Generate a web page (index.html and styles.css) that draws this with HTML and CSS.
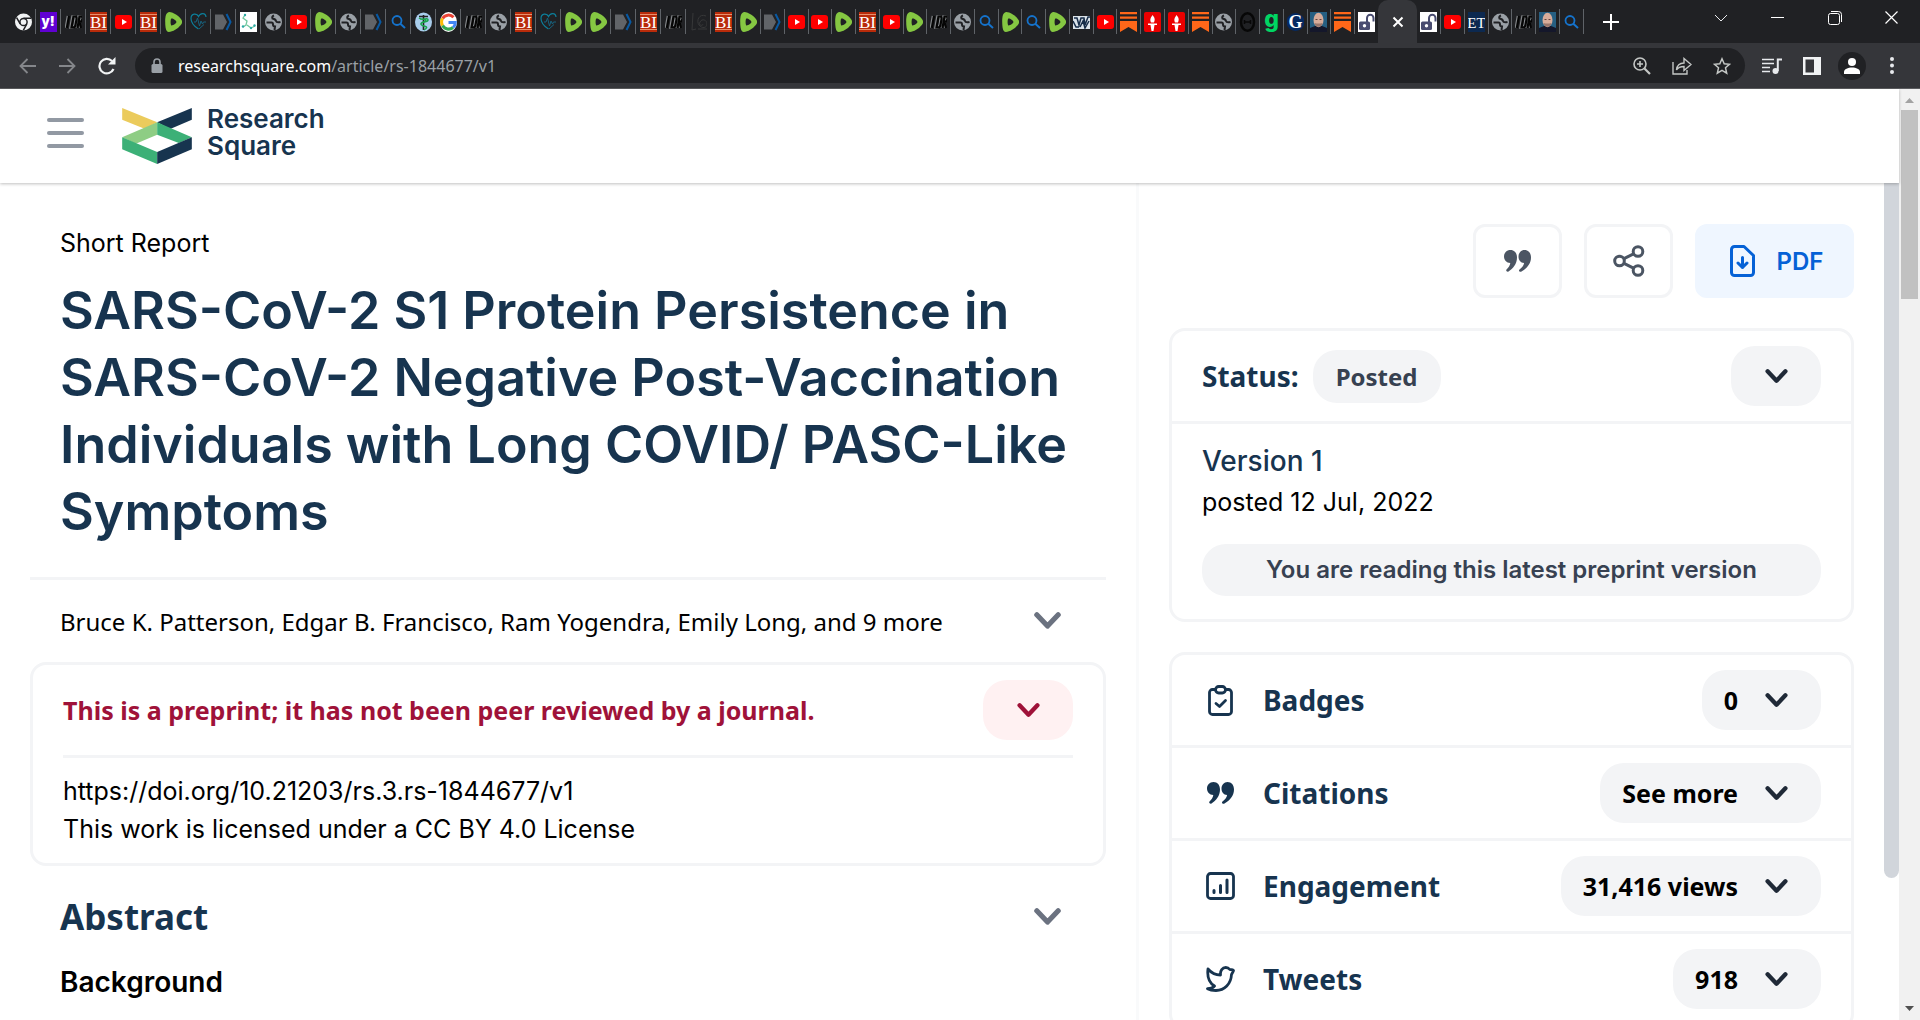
FILE: index.html
```html
<!DOCTYPE html>
<html lang="en">
<head>
    <meta charset="UTF-8">
    <meta name="viewport" content="width=device-width, initial-scale=1.0">
    <title>SARS-CoV-2 S1 Protein Persistence | Research Square</title>
    <link rel="stylesheet" href="styles.css">
</head>
<body>
    <!-- Icon sprite -->
    <svg class="sprite" aria-hidden="true">
        <symbol id="f-chrome" viewBox="0 0 17 20"><circle cx="8.5" cy="10" r="8.5" fill="#f1f3f4"/><circle cx="8.5" cy="10" r="3.6" fill="#f1f3f4" stroke="#202124" stroke-width="1.5"/><path d="M8.5 6.2h7.6M5.2 11.8L1.6 5.6M11.8 11.9L8.3 18.3" stroke="#202124" stroke-width="1.5"/></symbol>
        <symbol id="f-yahoo" viewBox="0 0 17 20"><rect width="17" height="20" fill="#6001d2"/><text x="8" y="14" text-anchor="middle" font-family="Inter" font-weight="900" font-size="13" fill="#fff">y!</text></symbol>
        <symbol id="f-idr" viewBox="0 0 17 20"><g fill="none" stroke="#85888b" stroke-width="2.6"><path d="M3 4L.8 16M7.500 4.500L5.500 15.500h1.500q2 0 2.500-2.500l1-5.500q.5-3-1.500-3zM11.500 16l2-11.500h1.500q2 0 1.500 2.500t-3 3l1.500 6"/></g><g fill="none" stroke="#050505" stroke-width="2.200"><path d="M4 4L1.800 16M8.500 4.500L6.500 15.500h1.500q2 0 2.500-2.500l1-5.500q.5-3-1.500-3zM12.500 16l2-11.500h1.500q2 0 1.500 2.500t-3 3l1.500 6"/></g></symbol>
        <symbol id="f-bi" viewBox="0 0 17 20"><rect width="17" height="20" fill="#b92b0a"/><path d="M0 2.500h17M0 17.500h17" stroke="#e8916f" stroke-width="1"/><text x="8.500" y="16" text-anchor="middle" font-family="Liberation Serif" font-size="17" fill="#fff">BI</text></symbol>
        <symbol id="f-yt" viewBox="0 0 17 20"><rect y="3" width="17" height="14" rx="3" fill="#f00"/><path d="M7 7l5 3-5 3z" fill="#fff"/></symbol>
        <symbol id="f-rumble" viewBox="0 0 17 20"><path d="M3.500.2C7-.6 15 4.500 16.800 8.500c.6 1.500.2 3-1 4.500-3 3.700-8 6.800-12 7C.5 20 .3 14 .2 10 .1 6 .5 1 3.500.2z" fill="#85c742"/><path d="M6.300 6.600c1.500-.4 5 1.900 5.200 3.400-.2 1.500-3.700 3.800-5.200 3.400-.9-1-.9-5.800 0-6.800z" fill="#202124"/></symbol>
        <symbol id="f-heart" viewBox="0 0 17 20"><path d="M16 5C15.500 0 10 1 8.500 4.500 7 1 1 1 1 6.500c0 4 3.500 8 7.500 10.500" fill="none" stroke="#0c7f9b" stroke-width="1.200"/><path d="M4 10h2l1.500-4 2 8 1.500-5 1.500 3 1-2H16M9 17l5-4.500" fill="none" stroke="#17627e" stroke-width="1"/></symbol>
        <symbol id="f-tag" viewBox="0 0 17 20"><path d="M0 2.500h8l4 7.500-4 7.500H0z" fill="#616468"/><path d="M11.500 2l4 8-4 8" fill="none" stroke="#0759a3" stroke-width="2"/></symbol>
        <symbol id="f-chem" viewBox="0 0 17 20"><rect width="17" height="20" fill="#fff"/><path d="M5 3L3 6l4 3-1 4-3 2M7 13l4 3 4-2" fill="none" stroke="#71c89f" stroke-width="1.300"/><g fill="#2ca7a5"><circle cx="5" cy="3" r="1.200"/><circle cx="3" cy="14.500" r="1.200"/><circle cx="11" cy="16" r="1.200"/><circle cx="14.500" cy="13.500" r="1.200"/></g></symbol>
        <symbol id="f-globe" viewBox="0 0 17 20"><circle cx="8.500" cy="10" r="8.500" fill="#9aa0a6"/><path d="M1.500 10.500h5q1.500 0 1.500 2t2 2l-.5 3.500M9 3.500q-2.500 1-1.500 3 3 .5 3.500 2.500t4.500 1" fill="none" stroke="#202124" stroke-width="2"/></symbol>
        <symbol id="f-search" viewBox="0 0 17 20"><circle cx="7" cy="8.500" r="4.500" fill="none" stroke="#1573cc" stroke-width="1.800"/><path d="M10.300 11.800L15 16" stroke="#1573cc" stroke-width="2"/></symbol>
        <symbol id="f-med" viewBox="0 0 17 20"><ellipse cx="8.500" cy="10" rx="8.500" ry="9.500" fill="#a8cdec"/><path d="M8.500 3v15M4 4.500h9" stroke="#222" stroke-width="1.600"/><path d="M5 7c7 0 7 2 3.500 3S5 13 9 14s3 2 0 4M4 6c4 3 9-1 9 2s-7 1-7 4" fill="none" stroke="#17a34a" stroke-width="1.500"/></symbol>
        <symbol id="f-google" viewBox="0 0 17 20"><ellipse cx="8.500" cy="10" rx="8.500" ry="10" fill="#fff"/><g fill="none" stroke-width="3"><path d="M13.500 5.300A6.800 6.800 0 0 0 2.600 6.500" stroke="#ea4335"/><path d="M2.600 6.500a6.800 6.800 0 0 0 0 7" stroke="#fbbc05"/><path d="M2.600 13.500a6.800 6.800 0 0 0 10.400 2" stroke="#34a853"/><path d="M13 15.500a6.800 6.800 0 0 0 2.300-5h-6.800" stroke="#4285f4"/></g></symbol>
        <symbol id="f-spiral" viewBox="0 0 17 20"><path d="M3 1L2 18l4-1M16 4C9 1 6 9 9 13s8 3 8-1-5-6-7-2 3 4 3 2M8 17h9" fill="none" stroke="#373839" stroke-width="1"/></symbol>
        <symbol id="f-w" viewBox="0 0 17 20"><rect y="4" width="17" height="13" fill="#dbe3ea"/><path d="M1 6h3l2 7 2-7h3l1 7 3-8h2M0 9l3 6h3M7 15l3-6 2 7 4-7" fill="none" stroke="#172d49" stroke-width="1.500"/></symbol>
        <symbol id="f-substack" viewBox="0 0 17 20"><path d="M0 0h17v2.300H0zM0 4.400h17v2.300H0zM0 9h17v11l-8.500-5L0 20z" fill="#ff6719"/></symbol>
        <symbol id="f-torch" viewBox="0 0 17 20"><rect width="17" height="20" rx="2" fill="#eb0000"/><path d="M8.500 3c2 2.500 3 4 1.500 7.500H7C5.500 7 7 5.500 8.500 3zM4 11.500h9v1.500H10.500L9.500 19h-2l-1-6H4z" fill="#fff"/></symbol>
        <symbol id="f-theta" viewBox="0 0 17 20"><ellipse cx="8.500" cy="10" rx="6.500" ry="8.700" fill="none" stroke="#070707" stroke-width="2.500"/><path d="M5 10h7M5.500 8v4M11.500 8v4" stroke="#070707" stroke-width="1.500"/></symbol>
        <symbol id="f-g" viewBox="0 0 17 20"><text x="8.500" y="14.500" text-anchor="middle" font-family="Inter" font-weight="800" font-size="23" fill="#00d563">g</text></symbol>
        <symbol id="f-guardian" viewBox="0 0 17 20"><circle cx="8.500" cy="10" r="9" fill="#052962"/><text x="8.500" y="16" text-anchor="middle" font-family="Liberation Serif" font-weight="700" font-size="18" fill="#fff">G</text></symbol>
        <symbol id="f-man" viewBox="0 0 17 20"><rect width="17" height="20" fill="#265f82"/><path d="M0 20v-4l5-2h7l5 2v4z" fill="#14172b"/><ellipse cx="8.500" cy="8" rx="5" ry="7.200" fill="#d7ac9a"/><path d="M4.500 11c1 5 7 5 8 0l-2 .5h-4z" fill="#98766c"/><path d="M5.500 7.500h2M9.500 7.500h2" stroke="#67443d"/></symbol>
        <symbol id="f-lock" viewBox="0 0 17 20"><rect width="17" height="20" fill="#fff"/><path d="M9 11V6a3 3 0 0 1 6.500 0v3.500" fill="none" stroke="#494c70" stroke-width="2"/><rect x="1" y="9.500" width="11" height="8.500" rx="1.500" fill="#494c70"/><circle cx="6.500" cy="13.700" r="1.700" fill="#fff"/></symbol>
        <symbol id="f-et" viewBox="0 0 17 20"><rect width="17" height="20" fill="#0c2950"/><text x="8.500" y="15.500" text-anchor="middle" font-family="Liberation Serif" font-size="15" fill="#fff">ET</text></symbol>
        <symbol id="i-chevron" viewBox="0 0 24 16"><path d="M2.500 2.500L12 12.500l9.500-10" fill="none" stroke="currentColor" stroke-width="4.600" stroke-linecap="round" stroke-linejoin="round"/></symbol>
        <symbol id="i-quote" viewBox="0 0 27 22"><path d="M6.500 0C10.500 0 13 3 13 7.500 13 14 9 18.500 4.500 21.500c-1.500.8-3-.8-2-2C4.500 17.500 6 15.500 6.300 13 2.500 13 0 10 0 6.500S2.500 0 6.500 0zM20.500 0C24.500 0 27 3 27 7.500 27 14 22.500 18.500 17.500 21.500c-1.500.8-3.500-.8-2-2 2.500-2 4.300-4 4.600-6.500C16.500 13 14.500 10 14.500 6.500S17 0 20.500 0z" fill="currentColor"/></symbol>
    </svg>

    <div class="browser">
        <div class="tab-strip">
            <div class="tabs">
                <button class="tab" aria-label="Tab"><svg><use href="#f-chrome"/></svg></button>
                <button class="tab" aria-label="Tab"><svg><use href="#f-yahoo"/></svg></button>
                <button class="tab" aria-label="Tab"><svg><use href="#f-idr"/></svg></button>
                <button class="tab" aria-label="Tab"><svg><use href="#f-bi"/></svg></button>
                <button class="tab" aria-label="Tab"><svg><use href="#f-yt"/></svg></button>
                <button class="tab" aria-label="Tab"><svg><use href="#f-bi"/></svg></button>
                <button class="tab" aria-label="Tab"><svg><use href="#f-rumble"/></svg></button>
                <button class="tab" aria-label="Tab"><svg><use href="#f-heart"/></svg></button>
                <button class="tab" aria-label="Tab"><svg><use href="#f-tag"/></svg></button>
                <button class="tab" aria-label="Tab"><svg><use href="#f-chem"/></svg></button>
                <button class="tab" aria-label="Tab"><svg><use href="#f-globe"/></svg></button>
                <button class="tab" aria-label="Tab"><svg><use href="#f-yt"/></svg></button>
                <button class="tab" aria-label="Tab"><svg><use href="#f-rumble"/></svg></button>
                <button class="tab" aria-label="Tab"><svg><use href="#f-globe"/></svg></button>
                <button class="tab" aria-label="Tab"><svg><use href="#f-tag"/></svg></button>
                <button class="tab" aria-label="Tab"><svg><use href="#f-search"/></svg></button>
                <button class="tab" aria-label="Tab"><svg><use href="#f-med"/></svg></button>
                <button class="tab" aria-label="Tab"><svg><use href="#f-google"/></svg></button>
                <button class="tab" aria-label="Tab"><svg><use href="#f-idr"/></svg></button>
                <button class="tab" aria-label="Tab"><svg><use href="#f-globe"/></svg></button>
                <button class="tab" aria-label="Tab"><svg><use href="#f-bi"/></svg></button>
                <button class="tab" aria-label="Tab"><svg><use href="#f-heart"/></svg></button>
                <button class="tab" aria-label="Tab"><svg><use href="#f-rumble"/></svg></button>
                <button class="tab" aria-label="Tab"><svg><use href="#f-rumble"/></svg></button>
                <button class="tab" aria-label="Tab"><svg><use href="#f-tag"/></svg></button>
                <button class="tab" aria-label="Tab"><svg><use href="#f-bi"/></svg></button>
                <button class="tab" aria-label="Tab"><svg><use href="#f-idr"/></svg></button>
                <button class="tab" aria-label="Tab"><svg><use href="#f-spiral"/></svg></button>
                <button class="tab" aria-label="Tab"><svg><use href="#f-bi"/></svg></button>
                <button class="tab" aria-label="Tab"><svg><use href="#f-rumble"/></svg></button>
            </div>
            <div class="tabs tabs-narrow">
                <button class="tab" aria-label="Tab"><svg><use href="#f-tag"/></svg></button>
                <button class="tab" aria-label="Tab"><svg><use href="#f-yt"/></svg></button>
                <button class="tab" aria-label="Tab"><svg><use href="#f-yt"/></svg></button>
                <button class="tab" aria-label="Tab"><svg><use href="#f-rumble"/></svg></button>
                <button class="tab" aria-label="Tab"><svg><use href="#f-bi"/></svg></button>
                <button class="tab" aria-label="Tab"><svg><use href="#f-yt"/></svg></button>
                <button class="tab" aria-label="Tab"><svg><use href="#f-rumble"/></svg></button>
                <button class="tab" aria-label="Tab"><svg><use href="#f-idr"/></svg></button>
                <button class="tab" aria-label="Tab"><svg><use href="#f-globe"/></svg></button>
                <button class="tab" aria-label="Tab"><svg><use href="#f-search"/></svg></button>
                <button class="tab" aria-label="Tab"><svg><use href="#f-rumble"/></svg></button>
                <button class="tab" aria-label="Tab"><svg><use href="#f-search"/></svg></button>
                <button class="tab" aria-label="Tab"><svg><use href="#f-rumble"/></svg></button>
                <button class="tab" aria-label="Tab"><svg><use href="#f-w"/></svg></button>
                <button class="tab" aria-label="Tab"><svg><use href="#f-yt"/></svg></button>
                <button class="tab" aria-label="Tab"><svg><use href="#f-substack"/></svg></button>
                <button class="tab" aria-label="Tab"><svg><use href="#f-torch"/></svg></button>
                <button class="tab" aria-label="Tab"><svg><use href="#f-torch"/></svg></button>
                <button class="tab" aria-label="Tab"><svg><use href="#f-substack"/></svg></button>
                <button class="tab" aria-label="Tab"><svg><use href="#f-globe"/></svg></button>
                <button class="tab" aria-label="Tab"><svg><use href="#f-theta"/></svg></button>
                <button class="tab" aria-label="Tab"><svg><use href="#f-g"/></svg></button>
                <button class="tab" aria-label="Tab"><svg><use href="#f-guardian"/></svg></button>
                <button class="tab" aria-label="Tab"><svg><use href="#f-man"/></svg></button>
                <button class="tab" aria-label="Tab"><svg><use href="#f-substack"/></svg></button>
            </div>
            <button class="tab tab-before" aria-label="Tab"><svg><use href="#f-lock"/></svg></button>
            <button class="tab-active" aria-label="Close tab"><svg width="12" height="12" viewBox="0 0 12 12"><path d="M1.500 1.500l9 9M10.500 1.500l-9 9" stroke="#fff" stroke-width="2"/></svg></button>
            <div class="tabs tabs-last">
                <button class="tab" aria-label="Tab"><svg><use href="#f-lock"/></svg></button>
                <button class="tab" aria-label="Tab"><svg><use href="#f-yt"/></svg></button>
                <button class="tab" aria-label="Tab"><svg><use href="#f-et"/></svg></button>
                <button class="tab" aria-label="Tab"><svg><use href="#f-globe"/></svg></button>
                <button class="tab" aria-label="Tab"><svg><use href="#f-idr"/></svg></button>
                <button class="tab" aria-label="Tab"><svg><use href="#f-man"/></svg></button>
                <button class="tab" aria-label="Tab"><svg><use href="#f-search"/></svg></button>
            </div>
            <button class="new-tab" aria-label="New tab"><svg width="16" height="16" viewBox="0 0 16 16"><path d="M8 0v16M0 8h16" stroke="#fff" stroke-width="2"/></svg></button>
            <div class="window-controls">
                <button aria-label="Search tabs"><svg width="14" height="8" viewBox="0 0 14 8"><path d="M1 1l6 6 6-6" fill="none" stroke="#e8eaed"/></svg></button>
                <button aria-label="Minimize"><svg width="13" height="13" viewBox="0 0 13 13"><path d="M0 6.500h13" stroke="#fff"/></svg></button>
                <button aria-label="Restore"><svg width="14" height="14" viewBox="0 0 14 14" fill="none" stroke="#fff"><rect x=".5" y="2.500" width="11" height="11" rx="2"/><path d="M3 .5h7.500a3 3 0 0 1 3 3V11"/></svg></button>
                <button aria-label="Close"><svg width="13" height="13" viewBox="0 0 13 13"><path d="M.5.5l12 12M12.500.5l-12 12" stroke="#fff" stroke-width="1.200"/></svg></button>
            </div>
        </div>

        <div class="toolbar">
            <div class="nav-buttons">
                <button aria-label="Back"><svg width="17" height="16" viewBox="0 0 17 16"><path d="M17 8H1.500M8.500 1l-7 7 7 7" fill="none" stroke="#85878b" stroke-width="1.800"/></svg></button>
                <button aria-label="Forward"><svg width="17" height="16" viewBox="0 0 17 16"><path d="M0 8h15.500M8.500 1l7 7-7 7" fill="none" stroke="#85878b" stroke-width="1.800"/></svg></button>
                <button aria-label="Reload"><svg width="18" height="18" viewBox="0 0 18 18"><path d="M15.500 12A7.300 7.300 0 1 1 14 4" fill="none" stroke="#f1f3f4" stroke-width="2.200"/><path d="M17.500 0v7.500H10z" fill="#f1f3f4"/></svg></button>
            </div>
            <div class="omnibox">
                <svg width="12" height="16" viewBox="0 0 12 16"><rect x=".5" y="6" width="11" height="9" rx="1.500" fill="#9aa0a6"/><path d="M3 6V4a3 3 0 0 1 6 0v2" fill="none" stroke="#9aa0a6" stroke-width="1.600"/></svg>
                <span class="url">researchsquare.com<span class="path">/article/rs-1844677/v1</span></span>
                <button aria-label="Zoom"><svg width="18" height="18" viewBox="0 0 18 18" fill="none" stroke="#c4c7c5" stroke-width="1.600"><circle cx="7" cy="7" r="6"/><path d="M4 7h6M7 4v6"/><path d="M11.500 11.500L17 17" stroke-width="2.200"/></svg></button>
                <button aria-label="Share"><svg width="20" height="18" viewBox="0 0 20 18" fill="none" stroke="#c4c7c5" stroke-width="1.400"><path d="M1 5v12h14v-4M4.500 13C5 8.500 8 6 12 6V1.500L19 7.500l-7 6V9.500c-3.500 0-6 1-7.500 3.500z"/></svg></button>
                <button aria-label="Bookmark"><svg width="18" height="18" viewBox="0 0 18 18"><path d="M9 1.800l2.200 5 5.300.5-4 3.500 1.200 5.300L9 13.300l-4.700 2.800 1.200-5.300-4-3.500 5.300-.5z" fill="none" stroke="#c4c7c5" stroke-width="1.500"/></svg></button>
            </div>
            <div class="tool-buttons">
                <button aria-label="Media"><svg width="20" height="16" viewBox="0 0 20 16"><path d="M0 1.500h12M0 5.500h12M0 9.500h8M0 13.500h8" stroke="#e8eaed" stroke-width="1.700"/><path d="M15.800 13V1.500H20" fill="none" stroke="#e8eaed" stroke-width="2"/><circle cx="13.500" cy="13" r="3" fill="#e8eaed"/></svg></button>
                <button aria-label="Side panel"><svg width="18" height="18" viewBox="0 0 18 18"><path d="M0 0h18v18H0zM2.500 2.500v13H11v-13z" fill="#f1f3f4" fill-rule="evenodd"/></svg></button>
                <button aria-label="Profile"><svg width="28" height="28" viewBox="0 0 28 28"><circle cx="14" cy="14" r="14" fill="#202124"/><circle cx="14" cy="10" r="4" fill="#fff"/><path d="M6 22v-2c0-3 4-4.500 8-4.500s8 1.500 8 4.500v2z" fill="#fff"/></svg></button>
                <button aria-label="Menu"><svg width="4" height="17" viewBox="0 0 4 17" fill="#e8eaed"><circle cx="2" cy="2" r="2"/><circle cx="2" cy="8.500" r="2"/><circle cx="2" cy="15" r="2"/></svg></button>
            </div>
        </div>

        <div class="viewport">
            <div class="page">
                <header class="site-header">
                    <button class="menu" aria-label="Open menu"><span></span><span></span><span></span></button>
                    <a class="logo" href="#">
                        <svg width="70" height="56" viewBox="0 0 209 168"><path d="M0 0l105 43-36 20L0 35z" fill="#ebcb5c"/><path d="M209 0v35l-65 28-39-20z" fill="#17344f"/><path d="M105 43v37l-64 27L0 88z" fill="#8ecd84"/><path d="M105 43l104 45-39 17-65-25z" fill="#3cb077"/><path d="M0 88l105 44v36L0 124z" fill="#3cb077"/><path d="M209 88v36l-104 44v-36z" fill="#17344f"/></svg>
                        <span>Research<br>Square</span>
                    </a>
                </header>

                <div class="columns">
                    <main class="article">
                        <div class="intro">
                            <p class="type">Short Report</p>
                            <h1>SARS-CoV-2 S1 Protein Persistence in SARS-CoV-2 Negative Post-Vaccination Individuals with Long COVID/ PASC-Like Symptoms</h1>
                        </div>
                        <div class="authors">
                            <span>Bruce K. Patterson, Edgar B. Francisco, Ram Yogendra, Emily Long, and 9 more</span>
                            <button class="toggle" aria-label="Show authors"><svg class="chevron-lg"><use href="#i-chevron"/></svg></button>
                        </div>
                        <section class="card notice">
                            <div class="notice-head">
                                <strong>This is a preprint; it has not been peer reviewed by a journal.</strong>
                                <button class="pill pill-red" aria-label="More about preprints"><svg class="chevron"><use href="#i-chevron"/></svg></button>
                            </div>
                            <div class="notice-body">
                                <a href="#">https://doi.org/10.21203/rs.3.rs-1844677/v1</a>
                                <p>This work is licensed under a <a href="#">CC BY 4.0 License</a></p>
                            </div>
                        </section>
                        <section class="abstract">
                            <div class="abstract-head">
                                <h2>Abstract</h2>
                                <button class="toggle" aria-label="Toggle abstract"><svg class="chevron-lg"><use href="#i-chevron"/></svg></button>
                            </div>
                            <h3>Background</h3>
                        </section>
                    </main>

                    <aside class="sidebar">
                        <div class="actions">
                            <button class="action" aria-label="Cite"><svg width="27" height="22"><use href="#i-quote"/></svg></button>
                            <button class="action" aria-label="Share"><svg width="32" height="32" viewBox="0 0 32 32" fill="none" stroke="currentColor" stroke-width="3"><circle cx="6.500" cy="16" r="4.800"/><circle cx="25" cy="6.500" r="4.800"/><circle cx="25" cy="25.500" r="4.800"/><path d="M11 13.700l9.500-4.900M11 18.300l9.500 4.900"/></svg></button>
                            <a class="pdf" href="#"><svg width="25" height="32" viewBox="0 0 25 32" fill="none" stroke="currentColor" stroke-width="3" stroke-linecap="round" stroke-linejoin="round"><path d="M4.500 1.500H14L23.500 10.500V27.500a3 3 0 0 1-3 3h-16a3 3 0 0 1-3-3v-23a3 3 0 0 1 3-3zM12.500 12.500v10M8 18l4.500 4.500L17 18"/></svg>PDF</a>
                        </div>

                        <section class="card">
                            <div class="row">
                                <h4>Status:</h4>
                                <span class="badge">Posted</span>
                                <button class="pill" aria-label="Show versions"><svg class="chevron"><use href="#i-chevron"/></svg></button>
                            </div>
                            <div class="version">
                                <h5>Version 1</h5>
                                <p>posted 12 Jul, 2022</p>
                                <div class="latest">You are reading this latest preprint version</div>
                            </div>
                        </section>

                        <section class="card">
                            <div class="row">
                                <span class="icon"><svg width="25" height="31" viewBox="0 0 25 31" fill="none" stroke="currentColor" stroke-width="2.800" stroke-linecap="round" stroke-linejoin="round"><path d="M7.500 4.500H4.500a3 3 0 0 0-3 3v19a3 3 0 0 0 3 3h16a3 3 0 0 0 3-3v-19a3 3 0 0 0-3-3H17.500"/><rect x="7.500" y="1.500" width="10" height="6.500" rx="3.200"/><path d="M8 18.500l3.500 3 6-6"/></svg></span>
                                <h4>Badges</h4>
                                <button class="pill">0 <svg class="chevron"><use href="#i-chevron"/></svg></button>
                            </div>
                            <div class="row">
                                <span class="icon"><svg width="27" height="22"><use href="#i-quote"/></svg></span>
                                <h4>Citations</h4>
                                <button class="pill">See more <svg class="chevron"><use href="#i-chevron"/></svg></button>
                            </div>
                            <div class="row">
                                <span class="icon"><svg width="29" height="28" viewBox="0 0 29 28" fill="none" stroke="currentColor" stroke-width="2.800" stroke-linecap="round"><rect x="1.500" y="1.500" width="26" height="25" rx="3"/><path d="M8 18.500v2M14.500 13.500v7M21 8v12.500" stroke-width="3"/></svg></span>
                                <h4>Engagement</h4>
                                <button class="pill">31,416 views <svg class="chevron"><use href="#i-chevron"/></svg></button>
                            </div>
                            <div class="row">
                                <span class="icon"><svg width="29" height="26" viewBox="0 0 29 26"><path d="M27.500 4.500c-.3 1.500-1.500 2.500-2 4C25 18 18.500 24.500 10 24.500c-3.500 0-6.500-.7-8.500-1.800 3 0 5.500-1 7-2.700C3.500 17 1 11 2 3c3 3.500 7 6 12.500 6-.5-4.500 2-7.500 5.300-7.500 2 0 3.200 1 4 2 1.500.5 2.500-.2 3.700 1z" fill="none" stroke="currentColor" stroke-width="2.800" stroke-linejoin="round"/></svg></span>
                                <h4>Tweets</h4>
                                <button class="pill">918 <svg class="chevron"><use href="#i-chevron"/></svg></button>
                            </div>
                        </section>
                    </aside>

                    <div class="inner-scroll"><span></span></div>
                </div>
            </div>
            <div class="scrollbar">
                <svg class="arrow" width="9" height="5" viewBox="0 0 9 5"><path d="M0 5l4.500-5L9 5z" fill="#a3a3a3"/></svg>
                <span class="thumb"></span>
                <svg class="arrow arrow-down" width="9" height="5" viewBox="0 0 9 5"><path d="M0 0h9L4.500 5z" fill="#505050"/></svg>
            </div>
        </div>
    </div>
</body>
</html>
```

FILE: styles.css
```css
* { box-sizing: border-box; }
body {
    margin: 0;
    font-family: Inter, "Liberation Sans", sans-serif;
    font-size: 24px;
    color: #000;
    background: #fff;
}
h1, h2, h3, h4, h5, p { margin: 0; }
a { color: inherit; text-decoration: none; }
button {
    border: none;
    padding: 0;
    background: none;
    color: inherit;
    font: inherit;
    cursor: pointer;
}
svg { display: block; flex: none; }
.sprite { display: none; }
.browser {
    height: 100vh;
    display: flex;
    flex-direction: column;
    overflow: hidden;
}

/* Browser chrome */
.tab-strip {
    flex: none;
    display: flex;
    align-items: center;
    height: 43px;
    padding-left: 11px;
    background: #202124;
}
.tabs { display: flex; }
.tab {
    flex: none;
    width: 25px;
    height: 25px;
    display: flex;
    align-items: center;
    justify-content: center;
    border-right: 1px solid #5f6368;
}
.tab svg { width: 17px; height: 20px; }
.tabs-narrow { width: 594px; }
.tabs-last { width: 167px; }
.tabs-narrow .tab, .tabs-last .tab { flex: 1; }
.tab-before { width: 23px; border: none; }
.tab-active {
    width: 39px;
    height: 43px;
    display: flex;
    align-items: center;
    justify-content: center;
    background: #35363a;
    border-radius: 10px 10px 0 0;
}
.new-tab { margin-left: 19px; }
.window-controls {
    display: flex;
    margin-left: auto;
    height: 35px;
    align-self: flex-start;
}
.window-controls button {
    width: 57px;
    display: flex;
    align-items: center;
    justify-content: center;
}
.toolbar {
    flex: none;
    display: flex;
    align-items: center;
    height: 46px;
    background: #35363a;
    border-bottom: 1px solid #5c5d60;
}
.nav-buttons {
    display: flex;
    padding-left: 7px;
    width: 135px;
}
.nav-buttons button, .tool-buttons button {
    width: 40px;
    display: flex;
    align-items: center;
    justify-content: center;
}
.omnibox {
    flex: 1;
    display: flex;
    align-items: center;
    height: 35px;
    padding: 0 14px 0 16px;
    border-radius: 18px;
    background: #202124;
    gap: 21px;
}
.url {
    flex: 1;
    margin-left: -6px;
    font-family: "Noto Sans", sans-serif;
    font-size: 16px;
    color: #fff;
}
.path { color: #9aa0a6; }
.tool-buttons {
    display: flex;
    padding: 0 8px 0 7px;
}

/* Page */
.viewport {
    flex: 1;
    display: flex;
    min-height: 0;
}
.page {
    flex: 1;
    display: flex;
    flex-direction: column;
}
.site-header {
    position: relative;
    flex: none;
    display: flex;
    align-items: center;
    height: 94px;
    padding: 0 47px;
    gap: 38px;
    box-shadow: 0 1px 3px rgba(0, 0, 0, 0.25);
}
.menu {
    display: flex;
    flex-direction: column;
    gap: 9px;
    width: 37px;
    margin-bottom: 6px;
}
.menu span {
    height: 4px;
    border-radius: 2px;
    background: #9299a3;
}
.logo {
    display: flex;
    align-items: center;
    gap: 15px;
    font-size: 26px;
    font-weight: 600;
    line-height: 27px;
    color: #17344f;
}
.logo span { padding-bottom: 8px; }
.columns {
    flex: 1;
    display: grid;
    grid-template-columns: minmax(0, 1139fr) minmax(0, 745fr) 15px;
    grid-template-rows: minmax(0, 1fr);
    min-height: 0;
}
.article {
    padding: 42px 30px 0;
    border-right: 3px solid #f9fafb;
}
.intro {
    padding: 0 30px 32px;
    border-bottom: 3px solid #f3f4f6;
}
.type {
    font-size: 25px;
    line-height: 36px;
    margin-bottom: 16px;
}
h1 {
    font-size: 52px;
    font-weight: 600;
    line-height: 67px;
    color: #17344f;
}
.authors {
    display: flex;
    align-items: center;
    justify-content: space-between;
    height: 82px;
    padding: 0 45px 0 30px;
    font-family: "Noto Sans", sans-serif;
}
.toggle { color: #6b7280; }
.chevron { width: 23px; height: 15px; }
.chevron-lg { width: 27px; height: 18px; }
.card {
    border: 3px solid #f3f4f6;
    border-radius: 16px;
}
.notice { padding: 0 30px; }
.notice-head {
    display: flex;
    align-items: center;
    justify-content: space-between;
    padding: 15px 0;
    border-bottom: 3px solid #f3f4f6;
    font-family: "Noto Sans", sans-serif;
    font-size: 25px;
    color: #9f1239;
}
.notice-body {
    padding: 14px 0 15px;
    font-size: 25px;
    line-height: 38px;
}
.pill {
    display: flex;
    align-items: center;
    justify-content: flex-end;
    gap: 27px;
    min-width: 90px;
    height: 60px;
    padding: 0 33px 0 22px;
    border-radius: 24px;
    background: #f3f4f6;
    font-size: 25px;
    font-weight: 700;
}
.pill .chevron { color: #1f2937; }
.pill-red { background: #fff1f2; }
.pill-red .chevron { color: #9f1239; }
.abstract { padding: 24px 30px 0; }
.abstract-head {
    display: flex;
    align-items: center;
    justify-content: space-between;
    padding-right: 15px;
}
h2 {
    font-family: "Noto Sans", sans-serif;
    font-size: 35px;
    line-height: 54px;
    color: #17344f;
}
h3 {
    margin-top: 18px;
    font-size: 28px;
    font-weight: 600;
    line-height: 40px;
}

/* Sidebar */
.sidebar {
    padding: 41px 30px 0;
    display: flex;
    flex-direction: column;
    gap: 30px;
    overflow: hidden;
}
.actions {
    display: flex;
    justify-content: flex-end;
    gap: 22px;
}
.action, .pdf {
    display: flex;
    align-items: center;
    justify-content: center;
    width: 89px;
    height: 74px;
    border: 3px solid #f3f4f6;
    border-radius: 12px;
    color: #4b5563;
}
.pdf {
    width: 159px;
    padding-left: 4px;
    gap: 22px;
    border-color: #eff6ff;
    background: #eff6ff;
    font-weight: 600;
    color: #0561d6;
}
.sidebar .card { flex: none; }
.row {
    display: flex;
    align-items: center;
    height: 93px;
    padding: 0 30px;
    border-bottom: 3px solid #f3f4f6;
    font-family: "Noto Sans", sans-serif;
}
.row .pill { margin-left: auto; }
.icon {
    display: flex;
    justify-content: center;
    width: 37px;
    margin-right: 24px;
    color: #17344f;
}
h4 {
    font-size: 28px;
    color: #17344f;
}
.badge {
    margin-left: 14px;
    padding: 0 23px;
    border-radius: 24px;
    background: #f3f4f6;
    font-weight: 700;
    line-height: 53px;
    color: #374151;
}
.version { padding: 15px 30px 23px; }
.version h5 {
    font-size: 28px;
    font-weight: 500;
    line-height: 44px;
    color: #17344f;
}
.version p {
    font-size: 25px;
    line-height: 38px;
    margin-bottom: 23px;
}
.latest {
    border-radius: 24px;
    background: #f3f4f6;
    font-weight: 600;
    line-height: 52px;
    text-align: center;
    color: #374151;
}

/* Scrollbars */
.inner-scroll span {
    display: block;
    height: 83%;
    border-radius: 0 0 8px 8px;
    background: #d1d5db;
}
.scrollbar {
    flex: none;
    display: flex;
    flex-direction: column;
    align-items: center;
    width: 21px;
    padding: 9px 0;
    background: #f1f1f1;
}
.thumb {
    width: 17px;
    height: 189px;
    margin-top: 7px;
    background: #c1c1c1;
}
.arrow-down { margin-top: auto; }
```
